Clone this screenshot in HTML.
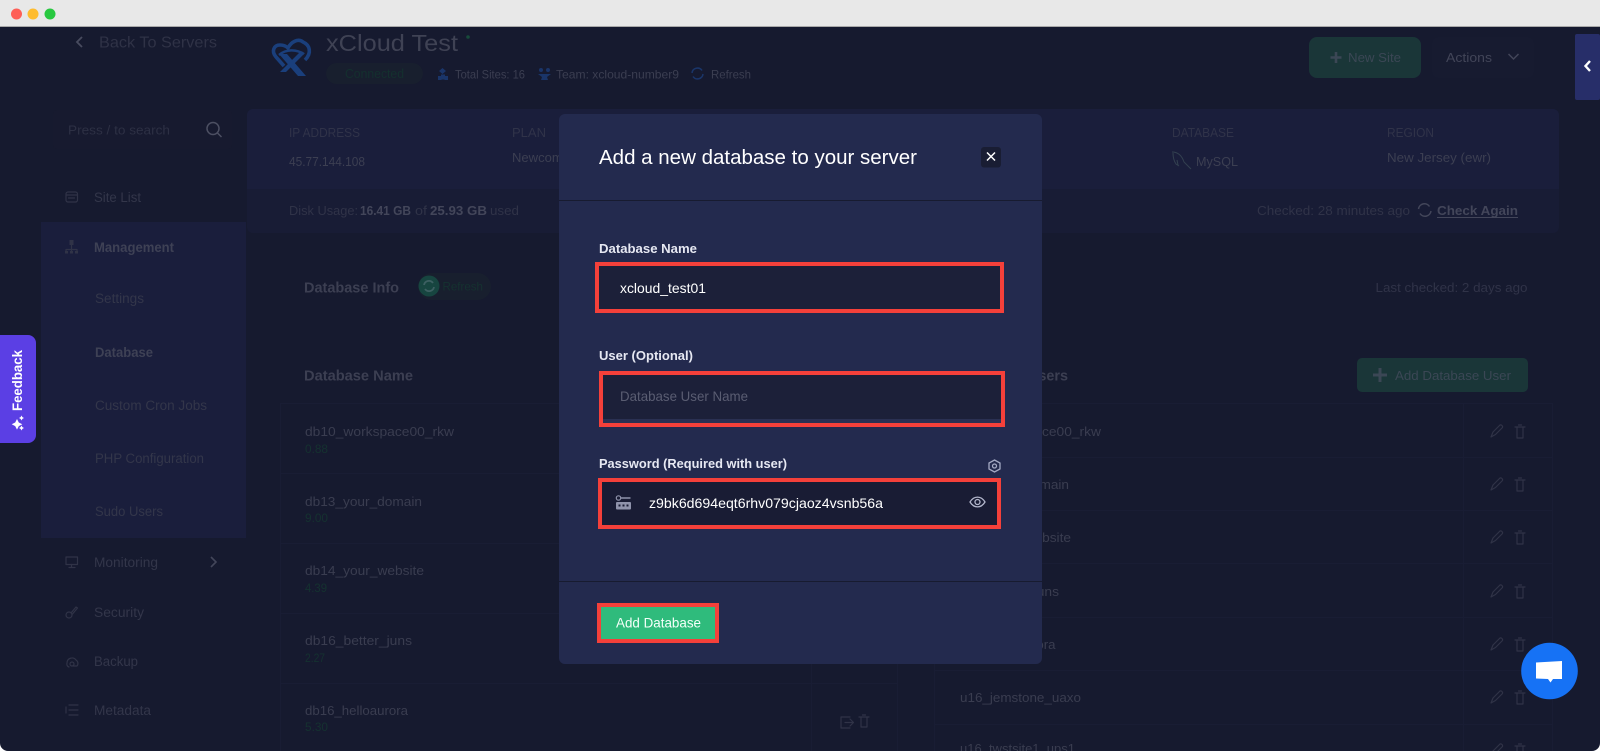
<!DOCTYPE html>
<html><head><meta charset="utf-8"><title>Add a new database</title>
<style>
html,body{margin:0;padding:0;background:#161a2f;width:1600px;height:751px;overflow:hidden}
svg{display:block}
text{font-family:"Liberation Sans",sans-serif;font-size:13px;fill:#3b3e51;white-space:pre}
.m{font-size:13.5px;fill:#33364a}
.b{font-weight:bold}
.g{font-size:12px;fill:#153230}
.r{font-size:13px;fill:#3a3d50}
.ic{fill:none;stroke:#303347;stroke-width:1.2;stroke-linecap:round;stroke-linejoin:round}
.ln{stroke:#191d34;stroke-width:1;fill:none}
</style></head><body>
<svg xmlns="http://www.w3.org/2000/svg" width="1600" height="751" viewBox="0 0 1600 751">
<rect width="1600" height="751" fill="#161a2f"/>
<!-- sidebar -->
<rect x="41" y="222" width="205" height="316" fill="#1a1e3c"/>
<rect x="53" y="110" width="179" height="39" rx="4" fill="#171a2f"/>
<path d="M82 37l-5 5 5 5" fill="none" stroke="#484b5f" stroke-width="1.800"/>
<text x="99" y="47.500" textLength="118" lengthAdjust="spacingAndGlyphs" style="font-size:16px;fill:#2f3246">Back To Servers</text>
<text x="68" y="134.500" textLength="102" lengthAdjust="spacingAndGlyphs" style="fill:#2d3044">Press / to search</text>
<circle cx="213" cy="128.500" r="6" fill="none" stroke="#4c4f62" stroke-width="1.500"/><path d="M217.500 133l4 4" stroke="#4c4f62" stroke-width="1.500"/>
<rect x="66" y="192" width="11.500" height="10" rx="2" class="ic"/><path d="M66 195h11.500M68.500 198h6" class="ic"/>
<text class="m" x="94" y="202" textLength="47" lengthAdjust="spacingAndGlyphs">Site List</text>
<path d="M71.500 241v5M66 252v-2.500h11v2.500M71.500 246v6" class="ic"/><rect x="69.500" y="240" width="4" height="5" fill="#303347"/><rect x="65" y="251" width="3" height="2.500" fill="#303347"/><rect x="70" y="251" width="3" height="2.500" fill="#303347"/><rect x="75" y="251" width="3" height="2.500" fill="#303347"/>
<text class="m b" x="94" y="252" textLength="80" lengthAdjust="spacingAndGlyphs" style="fill:#3e4155">Management</text>
<text class="m" x="95" y="303" textLength="49" lengthAdjust="spacingAndGlyphs">Settings</text>
<text class="m b" x="95" y="357" textLength="58" lengthAdjust="spacingAndGlyphs" style="fill:#3e4155">Database</text>
<text class="m" x="95" y="410" textLength="112" lengthAdjust="spacingAndGlyphs">Custom Cron Jobs</text>
<text class="m" x="95" y="463" textLength="109" lengthAdjust="spacingAndGlyphs">PHP Configuration</text>
<text class="m" x="95" y="516" textLength="68" lengthAdjust="spacingAndGlyphs">Sudo Users</text>
<rect x="66" y="557" width="11.500" height="7.500" class="ic"/><path d="M69 567.500h6M71.500 564.500v3" class="ic"/>
<text class="m" x="94" y="567" textLength="64" lengthAdjust="spacingAndGlyphs">Monitoring</text>
<path d="M211 557l5 5-5 5" fill="none" stroke="#43465a" stroke-width="1.600"/>
<circle cx="69" cy="615" r="3" class="ic"/><path d="M71 613l5-6 1.500 1-5 6" class="ic"/>
<text class="m" x="94" y="617" textLength="50" lengthAdjust="spacingAndGlyphs">Security</text>
<path d="M67 663a5 5 0 0 1 9-3 4 4 0 0 1 1 6h-4M67 663a3 3 0 0 0 2 4" class="ic"/><circle cx="72" cy="664" r="2" class="ic"/>
<text class="m" x="94" y="666" textLength="44" lengthAdjust="spacingAndGlyphs">Backup</text>
<path d="M69 705h9M69 710h9M69 715h9M66 707v6" class="ic"/>
<text class="m" x="94" y="715" textLength="57" lengthAdjust="spacingAndGlyphs">Metadata</text>
<!-- header -->
<path d="M284 66L276 57C271 51 274 45 280 45C284 45 286 46 288 48C291 42 298 38 303 42C310 45 312 53 305 60" fill="none" stroke="#1a3f7c" stroke-width="3.600"/>
<path d="M279 55C286 49 296 49 304 54" fill="none" stroke="#1a3f7c" stroke-width="2.500"/>
<path d="M279 54h8l19 22h-8zM299 53h6L286 72h-6z" fill="#1a3f7c"/>
<text x="326" y="51" textLength="132" lengthAdjust="spacingAndGlyphs" style="font-size:23px;fill:#3f4254">xCloud Test</text>
<circle cx="468" cy="37" r="1.800" fill="#174a3a"/>
<rect x="326" y="63" width="97" height="21" rx="10.500" fill="#181f2e"/>
<text x="345" y="78" textLength="59" lengthAdjust="spacingAndGlyphs" style="fill:#14302e">Connected</text>
<path d="M442.500 68l3.500 3-3.500 3-3.500-3zM438 76h3.500v4H438zM441 74.500h4v5h-4zM444.500 76h3.500v4h-3.500z" fill="#1a3569"/>
<text x="455" y="78.500" textLength="70" lengthAdjust="spacingAndGlyphs" style="font-size:12px;fill:#3b3e51">Total Sites: 16</text>
<circle cx="541" cy="70" r="2" fill="#1a3569"/><circle cx="548" cy="70" r="2" fill="#1a3569"/><path d="M538 74h13l-4 3 1 3h-7l1-3z" fill="#1a3569"/>
<text x="556" y="78.500" textLength="123" lengthAdjust="spacingAndGlyphs" style="font-size:12px;fill:#3b3e51">Team: xcloud-number9</text>
<path d="M692 73a5.500 5.500 0 0 1 10-2.500M703 74a5.500 5.500 0 0 1-10 2.500" fill="none" stroke="#1a3569" stroke-width="1.500"/>
<text x="711" y="78.500" textLength="40" lengthAdjust="spacingAndGlyphs" style="font-size:12px;fill:#3b3e51">Refresh</text>
<rect x="1309" y="37" width="112" height="41" rx="8" fill="#1a3638"/>
<path d="M1336 52v11M1330.500 57.500h11" stroke="#3b4755" stroke-width="2.600"/>
<text x="1348" y="62" textLength="53" lengthAdjust="spacingAndGlyphs" style="fill:#3b4755">New Site</text>
<rect x="1432" y="37" width="102" height="41" rx="6" fill="#171b30"/>
<text x="1446" y="62" textLength="46" lengthAdjust="spacingAndGlyphs" style="fill:#424558">Actions</text>
<path d="M1508.500 54l5 5 5-5" fill="none" stroke="#424558" stroke-width="1.500"/>
<rect x="1575" y="34" width="25" height="66" rx="2" fill="#272e69"/>
<path d="M1590 61l-4.500 5 4.500 5" fill="none" stroke="#fff" stroke-width="2.400"/>
<!-- info panel -->
<rect x="247" y="109" width="1312" height="124" rx="6" fill="#181c35"/>
<path d="M247 189v-74a6 6 0 0 1 6-6h1300a6 6 0 0 1 6 6v74z" fill="#1a1e3b"/>
<text x="289" y="137" textLength="71" lengthAdjust="spacingAndGlyphs" style="fill:#303349">IP ADDRESS</text>
<text x="289" y="166" textLength="76" lengthAdjust="spacingAndGlyphs" style="fill:#3c3f52">45.77.144.108</text>
<text x="512" y="137" textLength="34" lengthAdjust="spacingAndGlyphs" style="fill:#303349">PLAN</text>
<text x="512" y="162" textLength="92" lengthAdjust="spacingAndGlyphs" style="fill:#3c3f52">Newcomer Plan</text>
<text x="1172" y="137" textLength="62" lengthAdjust="spacingAndGlyphs" style="fill:#303349">DATABASE</text>
<path d="M1172 152c6 0 10 4 12 10l4 4 3 3M1173 153c0 5 1 8 3 11l3 2M1177 160l1 5" fill="none" stroke="#334050" stroke-width="1"/>
<text x="1196" y="166" textLength="42" lengthAdjust="spacingAndGlyphs" style="fill:#3c3f52">MySQL</text>
<text x="1387" y="137" textLength="47" lengthAdjust="spacingAndGlyphs" style="fill:#303349">REGION</text>
<text x="1387" y="162" textLength="104" lengthAdjust="spacingAndGlyphs" style="fill:#3c3f52">New Jersey (ewr)</text>
<text x="289" y="215" textLength="69" lengthAdjust="spacingAndGlyphs" style="fill:#303348">Disk Usage:</text>
<text class="b" x="360" y="215" textLength="51" lengthAdjust="spacingAndGlyphs" style="fill:#43465a">16.41 GB</text>
<text x="415" y="215" textLength="12" lengthAdjust="spacingAndGlyphs" style="fill:#303348">of</text>
<text class="b" x="430" y="215" textLength="57" lengthAdjust="spacingAndGlyphs" style="fill:#43465a">25.93 GB</text>
<text x="490" y="215" textLength="29" lengthAdjust="spacingAndGlyphs" style="fill:#303348">used</text>
<text x="1257" y="215" textLength="153" lengthAdjust="spacingAndGlyphs" style="fill:#303348">Checked: 28 minutes ago</text>
<path d="M1418.500 209a6 6 0 0 1 11-2.500M1431 211a6 6 0 0 1-11 2.500" fill="none" stroke="#43465a" stroke-width="1.500"/>
<text class="b" x="1437" y="215" textLength="81" lengthAdjust="spacingAndGlyphs" style="fill:#43465a">Check Again</text>
<rect x="1437" y="217" width="81" height="1" fill="#43465a"/>
<!-- database info -->
<text class="b" x="304" y="292.500" textLength="95" lengthAdjust="spacingAndGlyphs" style="font-size:15px;fill:#3c3f52">Database Info</text>
<rect x="418" y="273" width="73" height="27" rx="13.500" fill="#181f2e"/>
<circle cx="429" cy="286" r="10.500" fill="#174540"/>
<path d="M424 285a5 5 0 0 1 9-2M434 287a5 5 0 0 1-9 2" fill="none" stroke="#3d6062" stroke-width="1.800"/>
<text x="442.500" y="290.500" textLength="40.500" lengthAdjust="spacingAndGlyphs" style="font-size:12px;fill:#153230">Refresh</text>
<text x="1375.500" y="292" textLength="152" lengthAdjust="spacingAndGlyphs" style="fill:#303348">Last checked: 2 days ago</text>
<!-- left table -->
<text class="b" x="304" y="380.500" textLength="109" lengthAdjust="spacingAndGlyphs" style="font-size:15px;fill:#3c3f52">Database Name</text>
<path class="ln" d="M280 403.500H897M280 473.500H897M280 543.500H897M280 613.500H897M280 683.500H897M280.500 403V751M811.500 403V751M897.500 403V751"/>
<text class="r" x="305" y="436" textLength="149" lengthAdjust="spacingAndGlyphs">db10_workspace00_rkw</text>
<text class="g" x="305" y="453" textLength="23" lengthAdjust="spacingAndGlyphs">0.88</text>
<text class="r" x="305" y="506" textLength="117" lengthAdjust="spacingAndGlyphs">db13_your_domain</text>
<text class="g" x="305" y="522" textLength="23" lengthAdjust="spacingAndGlyphs">9.00</text>
<text class="r" x="305" y="575" textLength="119" lengthAdjust="spacingAndGlyphs">db14_your_website</text>
<text class="g" x="305" y="592" textLength="22" lengthAdjust="spacingAndGlyphs">4.39</text>
<text class="r" x="305" y="645" textLength="107" lengthAdjust="spacingAndGlyphs">db16_better_juns</text>
<text class="g" x="305" y="662" textLength="20" lengthAdjust="spacingAndGlyphs">2.27</text>
<text class="r" x="305" y="715" textLength="103" lengthAdjust="spacingAndGlyphs">db16_helloaurora</text>
<text class="g" x="305" y="731" textLength="23" lengthAdjust="spacingAndGlyphs">5.30</text>
<path d="M850 717h-9v11h9M845 722.500h8M850 719l3.500 3.500-3.500 3.500" class="ic"/>
<path d="M859 717h10M861 717v10h6v-10M862.500 715h3" class="ic" stroke-width="1.800"/>
<!-- right table -->
<text class="b" x="960" y="380.500" textLength="108" lengthAdjust="spacingAndGlyphs" style="font-size:15px;fill:#3c3f52">Database Users</text>
<rect x="1357" y="358" width="171" height="34" rx="5" fill="#1a3638"/>
<path d="M1380 368v14M1373 375h14" stroke="#3b4755" stroke-width="3"/>
<text x="1395" y="380" textLength="116" lengthAdjust="spacingAndGlyphs" style="fill:#3b4755">Add Database User</text>
<path class="ln" d="M934 403.500H1552M934 457.500H1552M934 510.500H1552M934 563.500H1552M934 617.500H1552M934 670.500H1552M934 724.500H1552M934.500 403V751M1463.500 403V751M1552.500 403V751"/>
<text class="r" x="960" y="436" textLength="141" lengthAdjust="spacingAndGlyphs">u16_workspace00_rkw</text>
<text class="r" x="960" y="489" textLength="109" lengthAdjust="spacingAndGlyphs">u16_your_domain</text>
<text class="r" x="960" y="542" textLength="111" lengthAdjust="spacingAndGlyphs">u16_your_website</text>
<text class="r" x="960" y="596" textLength="99" lengthAdjust="spacingAndGlyphs">u16_better_juns</text>
<text class="r" x="960" y="649" textLength="95.500" lengthAdjust="spacingAndGlyphs">u16_helloaurora</text>
<text class="r" x="960" y="702" textLength="121" lengthAdjust="spacingAndGlyphs">u16_jemstone_uaxo</text>
<text class="r" x="960" y="753" textLength="115" lengthAdjust="spacingAndGlyphs">u16_twstsite1_ups1</text>
<defs><g id="act"><path d="M1491 14l2 -5 7-7a2 2 0 0 1 2.500 2.500l-7 7z" class="ic" transform="translate(0 -7)"/><path d="M1515 -3h10M1517 -3v11h6v-11M1518.500 -5h3" class="ic" stroke-width="1.700"/></g></defs>
<use href="#act" y="430"/><use href="#act" y="483"/><use href="#act" y="536"/><use href="#act" y="590"/><use href="#act" y="643"/><use href="#act" y="696"/><use href="#act" y="749"/>
<!-- modal -->
<rect x="559" y="114" width="483" height="550" rx="6" fill="#232a4e"/>
<rect x="559" y="200" width="483" height="1" fill="#171b30"/>
<rect x="559" y="581" width="483" height="1" fill="#171b30"/>
<text x="599" y="164" textLength="318" lengthAdjust="spacingAndGlyphs" style="font-size:20px;fill:#fff">Add a new database to your server</text>
<rect x="981" y="147" width="20" height="20.500" rx="3" fill="#191d33"/>
<path d="M987 152.500l8 8M995 152.500l-8 8" stroke="#fff" stroke-width="1.500"/>
<text class="b" x="599" y="253" textLength="98" lengthAdjust="spacingAndGlyphs" style="fill:#e6e8f2">Database Name</text>
<rect x="597" y="264" width="405" height="47" fill="#1c2039" stroke="#f4403a" stroke-width="4"/>
<text x="620" y="293" textLength="86" lengthAdjust="spacingAndGlyphs" style="font-size:14px;fill:#fff">xcloud_test01</text>
<text class="b" x="599" y="360" textLength="94" lengthAdjust="spacingAndGlyphs" style="fill:#e6e8f2">User (Optional)</text>
<rect x="603" y="375" width="398" height="48" fill="#2a3052"/>
<rect x="603" y="375" width="398" height="44" fill="#1c2039"/>
<rect x="601" y="373" width="402" height="52" fill="none" stroke="#f4403a" stroke-width="4"/>
<text x="620" y="401" textLength="128" lengthAdjust="spacingAndGlyphs" style="font-size:14px;fill:#5a5d72">Database User Name</text>
<text class="b" x="599" y="468" textLength="188" lengthAdjust="spacingAndGlyphs" style="fill:#e6e8f2">Password (Required with user)</text>
<path d="M994.500 460l5.500 3v6l-5.500 3-5.500-3v-6z" fill="none" stroke="#a4a9c4" stroke-width="1.300"/><circle cx="994.500" cy="466" r="2" fill="none" stroke="#a4a9c4" stroke-width="1.300"/>
<rect x="600" y="480" width="399" height="47" fill="#191c34" stroke="#f4403a" stroke-width="4"/>
<rect x="616" y="502" width="15" height="7.500" rx="1" fill="#8f93ab"/><rect x="618.500" y="504.500" width="2" height="2" fill="#191c34"/><rect x="622.500" y="504.500" width="2" height="2" fill="#191c34"/><rect x="626.500" y="504.500" width="2" height="2" fill="#191c34"/>
<circle cx="618.500" cy="498" r="2.200" fill="none" stroke="#8f93ab" stroke-width="1.200"/><path d="M621 498h9.500" stroke="#8f93ab" stroke-width="1.500"/>
<text x="649" y="508" textLength="234" lengthAdjust="spacingAndGlyphs" style="font-size:14px;fill:#fff">z9bk6d694eqt6rhv079cjaoz4vsnb56a</text>
<path d="M970 502c4-6.500 11-6.500 15 0-4 6.500-11 6.500-15 0z" fill="none" stroke="#b3b7cc" stroke-width="1.300"/><circle cx="977.500" cy="502" r="2.500" fill="none" stroke="#b3b7cc" stroke-width="1.300"/>
<rect x="599" y="605" width="118" height="36" fill="#2fbb7c" stroke="#f4403a" stroke-width="4"/>
<text x="616" y="627.500" textLength="85" lengthAdjust="spacingAndGlyphs" style="font-size:14px;fill:#f4fff9">Add Database</text>
<!-- feedback -->
<path d="M0 335h28a8 8 0 0 1 8 8v92a8 8 0 0 1-8 8H0z" fill="#5b3fe4"/>
<text class="b" transform="translate(22 411) rotate(-90)" x="0" y="0" textLength="61" lengthAdjust="spacingAndGlyphs" style="font-size:14px;fill:#fff">Feedback</text>
<path d="M17 419l1.800 3.500 3.500 1.800-3.500 1.800-1.800 3.500-1.800-3.500-3.500-1.800 3.500-1.800z" fill="#fff"/><path d="M21.500 415.500l.9 1.600 1.600.9-1.600.9-.9 1.600-.9-1.600-1.600-.9 1.600-.9zM21.500 425.500l.9 1.600 1.600.9-1.600.9-.9 1.600-.9-1.600-1.600-.9 1.600-.9z" fill="#fff"/>
<!-- chat -->
<circle cx="1549.500" cy="671" r="28.300" fill="#1672f5"/>
<path d="M1536 662.500l26-1.500v18h-9l-2.500 3.500-2.500-3.500-12-.5z" fill="#fff"/>
<!-- titlebar -->
<rect width="1600" height="26" fill="#e8e8e8"/>
<rect y="26" width="1600" height="1" fill="#a9a9a9"/>
<circle cx="16.500" cy="14" r="5.500" fill="#fe5f57"/>
<circle cx="33" cy="14" r="5.500" fill="#febc2e"/>
<circle cx="50" cy="14" r="5.500" fill="#28c840"/>
<!-- window corners -->
<path d="M0 743v8h8a8 8 0 0 1-8-8zM1600 743v8h-8a8 8 0 0 0 8-8z" fill="#fff"/>
</svg>
</body></html>
